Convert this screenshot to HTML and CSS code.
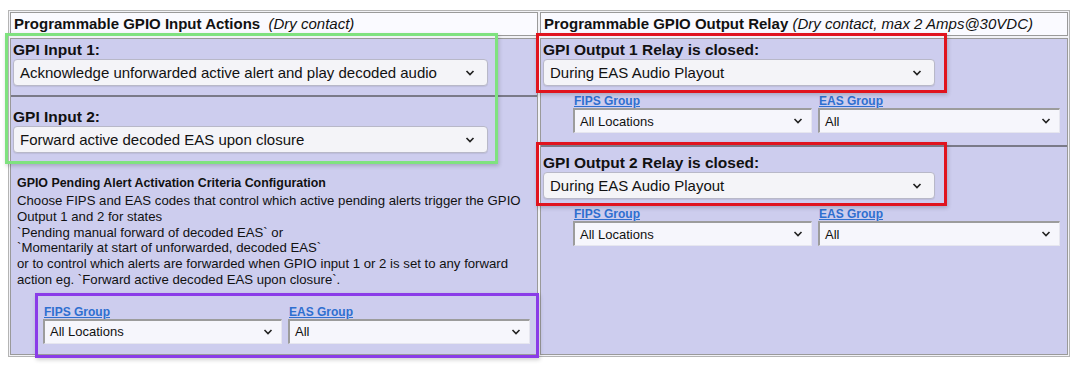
FILE: index.html
```html
<!DOCTYPE html>
<html lang="en">
<head>
    <meta charset="UTF-8">
    <title>GPIO Configuration</title>
    <link rel="stylesheet" href="styles.css">
</head>
<body>
<div class="page">
    <div class="gpio">
        <div class="head">Programmable GPIO Input Actions&nbsp; <em>(Dry contact)</em></div>
        <div class="head">Programmable GPIO Output Relay <em>(Dry contact, max 2 Amps@30VDC)</em></div>

        <!-- Inputs -->
        <div class="cell">
            <div class="label first">GPI Input 1:</div>
            <div class="select wide">
                <span>Acknowledge unforwarded active alert and play decoded audio</span>
                <svg width="10" height="6" viewBox="0 0 10 6"><path d="M1.5 1l3.5 3.5 3.5-3.5" fill="none" stroke="#222" stroke-width="1.7"/></svg>
            </div>
            <div class="rule"></div>
            <div class="label">GPI Input 2:</div>
            <div class="select wide">
                <span>Forward active decoded EAS upon closure</span>
                <svg width="10" height="6" viewBox="0 0 10 6"><path d="M1.5 1l3.5 3.5 3.5-3.5" fill="none" stroke="#222" stroke-width="1.7"/></svg>
            </div>

            <div class="pending">
                <div class="pending-title">GPIO Pending Alert Activation Criteria Configuration</div>
                <p>Choose FIPS and EAS codes that control which active pending alerts trigger the GPIO Output 1 and 2 for states<br>
                `Pending manual forward of decoded EAS` or<br>
                `Momentarily at start of unforwarded, decoded EAS`<br>
                or to control which alerts are forwarded when GPIO input 1 or 2 is set to any forward action eg. `Forward active decoded EAS upon closure`.</p>
                <div class="groups in-pending">
                    <div class="group">
                        <a href="#">FIPS Group</a>
                        <div class="select flat"><span>All Locations</span><svg width="10" height="6" viewBox="0 0 10 6"><path d="M1.5 1l3.5 3.5 3.5-3.5" fill="none" stroke="#222" stroke-width="1.6"/></svg></div>
                    </div>
                    <div class="group">
                        <a href="#">EAS Group</a>
                        <div class="select flat"><span>All</span><svg width="10" height="6" viewBox="0 0 10 6"><path d="M1.5 1l3.5 3.5 3.5-3.5" fill="none" stroke="#222" stroke-width="1.6"/></svg></div>
                    </div>
                </div>
            </div>
        </div>

        <!-- Outputs -->
        <div class="cell">
            <div class="label first">GPI Output 1 Relay is closed:</div>
            <div class="select relay">
                <span>During EAS Audio Playout</span>
                <svg width="10" height="6" viewBox="0 0 10 6"><path d="M1.5 1l3.5 3.5 3.5-3.5" fill="none" stroke="#222" stroke-width="1.7"/></svg>
            </div>
            <div class="groups">
                <div class="group">
                    <a href="#">FIPS Group</a>
                    <div class="select flat"><span>All Locations</span><svg width="10" height="6" viewBox="0 0 10 6"><path d="M1.5 1l3.5 3.5 3.5-3.5" fill="none" stroke="#222" stroke-width="1.6"/></svg></div>
                </div>
                <div class="group">
                    <a href="#">EAS Group</a>
                    <div class="select flat"><span>All</span><svg width="10" height="6" viewBox="0 0 10 6"><path d="M1.5 1l3.5 3.5 3.5-3.5" fill="none" stroke="#222" stroke-width="1.6"/></svg></div>
                </div>
            </div>
            <div class="rule wide-gap"></div>
            <div class="label second">GPI Output 2 Relay is closed:</div>
            <div class="select relay">
                <span>During EAS Audio Playout</span>
                <svg width="10" height="6" viewBox="0 0 10 6"><path d="M1.5 1l3.5 3.5 3.5-3.5" fill="none" stroke="#222" stroke-width="1.7"/></svg>
            </div>
            <div class="groups">
                <div class="group">
                    <a href="#">FIPS Group</a>
                    <div class="select flat"><span>All Locations</span><svg width="10" height="6" viewBox="0 0 10 6"><path d="M1.5 1l3.5 3.5 3.5-3.5" fill="none" stroke="#222" stroke-width="1.6"/></svg></div>
                </div>
                <div class="group">
                    <a href="#">EAS Group</a>
                    <div class="select flat"><span>All</span><svg width="10" height="6" viewBox="0 0 10 6"><path d="M1.5 1l3.5 3.5 3.5-3.5" fill="none" stroke="#222" stroke-width="1.6"/></svg></div>
                </div>
            </div>
        </div>
    </div>

    <!-- Annotation frames drawn over the form -->
    <div class="mark mark-green"></div>
    <div class="mark mark-red1"></div>
    <div class="mark mark-red2"></div>
    <div class="mark mark-purple"></div>
</div>
</body>
</html>
```

FILE: styles.css
```css
body {
    margin: 0;
    background: #fff;
    font-family: 'Liberation Sans', Arial, sans-serif;
    color: #111;
}

.page {
    position: relative;
    width: 1083px;
    height: 383px;
}

.gpio {
    position: absolute;
    left: 8px;
    top: 10px;
    width: 1058px;
    border: 1px solid #b4b4b4;
    padding: 1px;
    display: grid;
    grid-template-columns: 528px 528px;
    grid-template-rows: 24px 317px;
    gap: 2px 2px;
    background: #f2f2f6;
}

.head {
    background: #fafaff;
    border: 1px solid #9a9a9a;
    font-size: 15px;
    font-weight: bold;
    line-height: 22px;
    padding-left: 3px;
    white-space: nowrap;
}

.head em {
    font-weight: normal;
}

.cell {
    background: #cdcdee;
    border: 1px solid #9a9a9a;
    padding: 0 2px;
}

.label {
    font-size: 15.5px;
    font-weight: bold;
    line-height: 16px;
    margin-top: 12px;
}

.label.first { margin-top: 3px; }
.label.second { margin-top: 8px; }

.select {
    display: flex;
    align-items: center;
    justify-content: space-between;
    box-sizing: border-box;
    white-space: nowrap;
}

.select.wide,
.select.relay {
    margin-top: 1px;
    height: 27px;
    background: #f4f4f8;
    border: 1px solid #b8b8c8;
    border-radius: 4px;
    padding: 0 12px 0 6px;
    font-size: 15px;
    box-shadow: 0 1px 1px rgba(0,0,0,0.08);
}

.select.wide { width: 475px; }
.select.relay { width: 392px; }

.select.flat {
    height: 25px;
    background: #f6f6fc;
    border-top: 2px solid #9c9c9c;
    border-left: 2px solid #9c9c9c;
    border-right: 1px solid #e6e6ef;
    border-bottom: 1px solid #e6e6ef;
    padding: 0 8px 0 5px;
    font-size: 13px;
}

.rule {
    height: 0;
    border-top: 2px solid #7a7a88;
    margin: 9px -2px 0;
}

.rule.wide-gap { margin-top: 12px; }

.groups {
    display: flex;
    gap: 6px;
    margin-left: 30px;
    margin-top: 8px;
}

.group {
    display: flex;
    flex-direction: column;
}

.group:first-child { width: 239px; }
.group:last-child { width: 242px; }

.group a {
    font-size: 12px;
    font-weight: bold;
    line-height: 14px;
    color: #2f6fd0;
    text-decoration: underline;
    align-self: flex-start;
    margin-left: 1px;
}

.pending {
    margin-top: 22px;
    padding-left: 4px;
}

.pending-title {
    font-size: 12.4px;
    font-weight: bold;
    line-height: 16px;
}

.pending p {
    margin: 2px 0 0;
    font-size: 13.2px;
    line-height: 15.8px;
    width: 520px;
}

.groups.in-pending {
    margin-left: 26px;
    margin-top: 17px;
}

/* annotation frames */
.mark {
    position: absolute;
    box-sizing: border-box;
    border: 3px solid;
    box-shadow: 1px 2px 4px rgba(0,0,0,0.18);
}

.mark-green {
    left: 5px;
    top: 33px;
    width: 493px;
    height: 131px;
    border-color: #7fe27f;
}

.mark-red1 {
    left: 536px;
    top: 33px;
    width: 411px;
    height: 60px;
    border-color: #e0141e;
}

.mark-red2 {
    left: 536px;
    top: 142px;
    width: 411px;
    height: 64px;
    border-color: #e0141e;
}

.mark-purple {
    left: 35px;
    top: 293px;
    width: 504px;
    height: 65px;
    border-color: #8a3ce8;
}
```
